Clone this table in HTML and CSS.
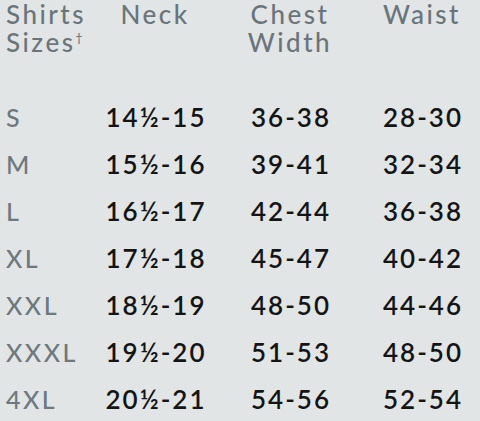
FILE: index.html
```html
<!DOCTYPE html>
<html>
<head>
<meta charset="utf-8">
<link rel="stylesheet" href="styles.css">
</head>
<body>
<div class="chart">
  <div class="head first">Shirts<br>Sizes<sup>†</sup></div>
  <div class="head">Neck</div>
  <div class="head">Chest<br>Width</div>
  <div class="head">Waist</div>

  <div class="size">S</div><div class="val">14½-15</div><div class="val">36-38</div><div class="val">28-30</div>
  <div class="size">M</div><div class="val">15½-16</div><div class="val">39-41</div><div class="val">32-34</div>
  <div class="size">L</div><div class="val">16½-17</div><div class="val">42-44</div><div class="val">36-38</div>
  <div class="size">XL</div><div class="val">17½-18</div><div class="val">45-47</div><div class="val">40-42</div>
  <div class="size">XXL</div><div class="val">18½-19</div><div class="val">48-50</div><div class="val">44-46</div>
  <div class="size">XXXL</div><div class="val">19½-20</div><div class="val">51-53</div><div class="val">48-50</div>
  <div class="size">4XL</div><div class="val">20½-21</div><div class="val">54-56</div><div class="val">52-54</div>
</div>
</body>
</html>
```
FILE: styles.css
```css
html, body {
  margin: 0;
  padding: 0;
  background: #e1e5e6;
}
body {
  width: 480px;
  height: 421px;
  overflow: hidden;
  font-family: "Lato", "Open Sans", sans-serif;
}
.chart {
  display: grid;
  grid-template-columns: 90px 118px 152px 112px;
  padding: 0 0 0 6px;
}
.head {
  color: #6a757b;
  font-size: 26px;
  line-height: 28px;
  letter-spacing: 2.5px;
  text-align: center;
  font-weight: 500;
  padding-bottom: 38px;
}
.head.first {
  text-align: left;
}
.head sup {
  font-size: 12px;
  line-height: 0;
  vertical-align: 10px;
  letter-spacing: 0;
}
.size {
  color: #6e787d;
  font-size: 25px;
  line-height: 47px;
  letter-spacing: 2.5px;
  font-weight: 500;
}
.val {
  color: #141414;
  font-size: 26px;
  line-height: 47px;
  letter-spacing: 2px;
  text-indent: 2px;
  text-align: center;
  font-weight: 600;
}
```
